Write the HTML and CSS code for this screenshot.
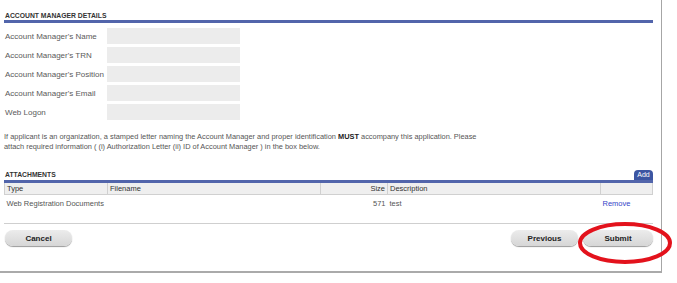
FILE: index.html
```html
<!DOCTYPE html>
<html lang="en">
<head>
    <meta charset="UTF-8">
    <title>Account Manager Details</title>
    <link rel="stylesheet" href="styles.css">
</head>
<body>
    <div class="page">
        <div class="section-head">
            <h2>ACCOUNT MANAGER DETAILS</h2>
        </div>

        <div class="form">
            <div class="row"><label>Account Manager's Name</label><input class="field" type="text"></div>
            <div class="row"><label>Account Manager's TRN</label><input class="field" type="text"></div>
            <div class="row"><label>Account Manager's Position</label><input class="field" type="text"></div>
            <div class="row"><label>Account Manager's Email</label><input class="field" type="text"></div>
            <div class="row"><label>Web Logon</label><input class="field" type="text"></div>
        </div>

        <p class="note">If applicant is an organization, a stamped letter naming the Account Manager and proper identification <b>MUST</b> accompany this application. Please<br>attach required information ( (i) Authorization Letter (ii) ID of Account Manager ) in the box below.</p>

        <div class="section-head attach-head">
            <h2>ATTACHMENTS</h2>
            <span class="add">Add</span>
        </div>

        <table class="files">
            <thead>
                <tr>
                    <th class="c-type">Type</th>
                    <th class="c-name">Filename</th>
                    <th class="c-size">Size</th>
                    <th class="c-desc">Description</th>
                    <th class="c-act"></th>
                </tr>
            </thead>
            <tbody>
                <tr>
                    <td>Web Registration Documents</td>
                    <td></td>
                    <td class="c-size">571</td>
                    <td>test</td>
                    <td><a class="remove" href="#">Remove</a></td>
                </tr>
            </tbody>
        </table>

        <div class="actions">
            <button class="btn">Cancel</button>
            <div class="nav">
                <button class="btn">Previous</button>
                <button class="btn">Submit</button>
            </div>
            <svg class="circle" width="96" height="44" viewBox="0 0 96 44">
                <ellipse cx="48" cy="22" rx="45" ry="19" fill="none" stroke="#e3121c" stroke-width="4"/>
            </svg>
        </div>
    </div>
</body>
</html>
```

FILE: styles.css
```css
/* base */
* {
    box-sizing: border-box;
}

body {
    margin: 0;
    background: #fff;
    font-family: "Liberation Sans", Arial, sans-serif;
    color: #555;
}

.page {
    width: 662px;
    height: 273px;
    padding: 0 8px 0 4px;
    border-right: 1px solid #a6a6a6;
    border-bottom: 2px solid #aaa;
}

/* section headers */
.section-head {
    padding-top: 11px;
    border-bottom: 3px solid #5265ab;
}

.section-head h2 {
    margin: 0;
    padding-left: 1px;
    font-size: 6.8px;
    line-height: 9px;
    font-weight: bold;
    color: #333;
}

/* form */
.form {
    padding-top: 5px;
}

.row {
    display: flex;
    align-items: center;
    height: 16px;
    margin-bottom: 3px;
}

.row label {
    width: 103px;
    padding-left: 1px;
    font-size: 8px;
    color: #5a5a5a;
}

.field {
    width: 133px;
    height: 16px;
    border: none;
    background: #ececec;
    padding: 0;
}

.note {
    margin: 12px 0 0;
    font-size: 7.4px;
    line-height: 10px;
    color: #555;
}

.note b {
    color: #222;
}

/* attachments */
.attach-head {
    margin-top: 18px;
    padding-top: 0;
    display: flex;
    justify-content: space-between;
    align-items: flex-end;
}

.attach-head h2 {
    line-height: 10px;
}

.add {
    width: 19px;
    height: 10px;
    background: #3c55a2;
    border-radius: 4px 4px 0 0;
    color: #fff;
    font-size: 7px;
    line-height: 10px;
    text-align: center;
}

.files {
    width: 100%;
    border-collapse: collapse;
    font-size: 7.5px;
    color: #555;
}

.files th {
    height: 11px;
    padding: 0 2px;
    background: #efefef;
    border: 1px solid #d0d0d0;
    border-top: none;
    font-weight: normal;
    color: #333;
    text-align: left;
}

.files td {
    height: 18px;
    padding: 0 2px;
}

.c-type { width: 103px; }
.c-name { width: 213px; }
.files .c-size { width: 67px; text-align: right; }
.c-desc { width: 213px; }

.remove {
    color: #3443c8;
    text-decoration: none;
}

/* buttons */
.actions {
    position: relative;
    margin-top: 11px;
    padding-top: 6px;
    border-top: 1px solid #cfcfcf;
    display: flex;
    justify-content: space-between;
}

.nav {
    display: flex;
    gap: 4px;
}

.btn {
    width: 67px;
    height: 16px;
    margin-left: 1px;
    border: none;
    border-radius: 8px;
    background: linear-gradient(#ececec, #d6d6d6);
    box-shadow: 0 1px 1px #9a9a9a;
    font-family: "Liberation Sans", Arial, sans-serif;
    font-size: 8px;
    font-weight: bold;
    color: #222;
    padding: 0;
}

.nav .btn:last-child {
    width: 70px;
}

.circle {
    position: absolute;
    left: 573px;
    top: -3px;
}
```
